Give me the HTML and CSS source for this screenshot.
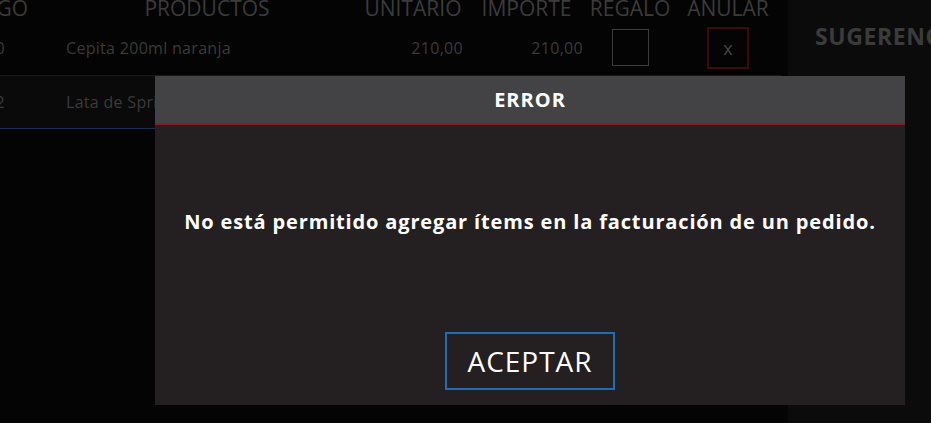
FILE: index.html
```html
<!DOCTYPE html>
<html lang="es">

<head>
  <meta charset="UTF-8">
  <meta name="viewport" content="width=device-width, initial-scale=1.0">
  <title>Facturación</title>
  <link rel="stylesheet" href="styles.css">
</head>

<body>
  <div class="layout">
    <main class="order">
      <div class="order-table">
        <div class="row head">
          <div class="cell code">CÓDIGO</div>
          <div class="cell product">PRODUCTOS</div>
          <div class="cell unit">UNITARIO</div>
          <div class="cell amount">IMPORTE</div>
          <div class="cell gift">REGALO</div>
          <div class="cell remove">ANULAR</div>
        </div>
        <div class="row item">
          <div class="cell code">1030</div>
          <div class="cell product">Cepita 200ml naranja</div>
          <div class="cell unit">210,00</div>
          <div class="cell amount">210,00</div>
          <div class="cell gift"><span class="check"></span></div>
          <div class="cell remove"><span class="remove-btn">x</span></div>
        </div>
        <div class="row item alt">
          <div class="cell code">1042</div>
          <div class="cell product">Lata de Sprite 354ml</div>
          <div class="cell unit">180,00</div>
          <div class="cell amount">180,00</div>
          <div class="cell gift"><span class="check"></span></div>
          <div class="cell remove"><span class="remove-btn">x</span></div>
        </div>
      </div>
    </main>
    <aside class="suggestions">
      <h2>SUGERENCIAS</h2>
    </aside>
  </div>

  <div class="overlay">
    <div class="modal">
      <div class="modal-header">ERROR</div>
      <div class="modal-body">
        <p class="modal-message">No está permitido agregar ítems en la facturación de un pedido.</p>
        <div class="modal-actions">
          <button class="btn-accept">ACEPTAR</button>
        </div>
      </div>
    </div>
  </div>
</body>
</html>
```

FILE: styles.css
```css
html {
  background-color: #040404;
}

body {
  margin: 0;
  height: 423px;
  overflow: hidden;
  font-family: "Open Sans", "Noto Sans", sans-serif;
  color: #3a3a3a;
}

.layout {
  display: flex;
  height: 100%;
}

.order {
  width: 788px;
  flex-shrink: 0;
  overflow: hidden;
}

.order-table {
  margin-left: -100px;
  margin-top: -4px;
  width: 881px;
}

.row {
  display: grid;
  grid-template-columns: 156px 302px 110px 117px 90px 106px;
  align-items: center;
}

.row.head {
  height: 24px;
  font-size: 21px;
  line-height: 24px;
  color: #3b3b3b;
}

.row.item {
  height: 56px;
  font-size: 16px;
  letter-spacing: 0.3px;
  border-bottom: 1px solid #0e1a28;
  box-sizing: border-box;
}

.row.item.alt {
  height: 53px;
  background: #0a0a0a;
  border-bottom-color: #1b3050;
}

.head .cell {
  text-align: center;
  white-space: nowrap;
}

.head .code {
  text-align: right;
  padding-right: 28px;
}

.item .code {
  text-align: right;
  padding-right: 51px;
}

.item .product {
  padding-left: 10px;
  white-space: nowrap;
}

.item .unit,
.item .amount {
  text-align: right;
  padding-right: 5px;
}

.item .amount {
  padding-right: 2px;
}

.gift,
.remove {
  display: flex;
  justify-content: center;
}

.check {
  width: 37px;
  height: 37px;
  box-sizing: border-box;
  border: 1px solid #3c3c3c;
}

.remove-btn {
  width: 42px;
  height: 42px;
  box-sizing: border-box;
  border: 2px solid #3a0a0e;
  display: flex;
  align-items: center;
  justify-content: center;
  font-size: 18px;
  color: #444;
}

.suggestions {
  flex: 1;
  min-width: 0;
  overflow: hidden;
  background: #0b0b0b;
  padding-left: 27px;
}

.suggestions h2 {
  margin: 20px 0 0;
  font-size: 23px;
  letter-spacing: 0.6px;
  font-weight: 700;
  color: #3b3b3b;
  white-space: nowrap;
}

/* modal */

.overlay {
  position: fixed;
  inset: 0;
}

.modal {
  position: absolute;
  left: 155px;
  top: 76px;
  width: 750px;
  height: 329px;
  display: flex;
  flex-direction: column;
  background: #242022;
}

.modal-header {
  height: 47px;
  background: #434345;
  border-bottom: 2px solid #8b1a24;
  display: flex;
  align-items: center;
  justify-content: center;
  font-size: 20px;
  letter-spacing: 1px;
  font-weight: 700;
  color: #fff;
}

.modal-body {
  flex: 1;
  display: flex;
  flex-direction: column;
  align-items: center;
}

.modal-message {
  margin: 83px 0 0;
  font-size: 20px;
  letter-spacing: 0.85px;
  font-weight: 700;
  color: #fff;
  white-space: nowrap;
}

.modal-actions {
  margin-top: auto;
  margin-bottom: 15px;
}

.btn-accept {
  width: 170px;
  height: 58px;
  background: transparent;
  border: 2px solid #1f6db3;
  color: #fff;
  font-family: "Open Sans", "Noto Sans", sans-serif;
  font-size: 28px;
  letter-spacing: 1px;
  padding: 0;
}
```
